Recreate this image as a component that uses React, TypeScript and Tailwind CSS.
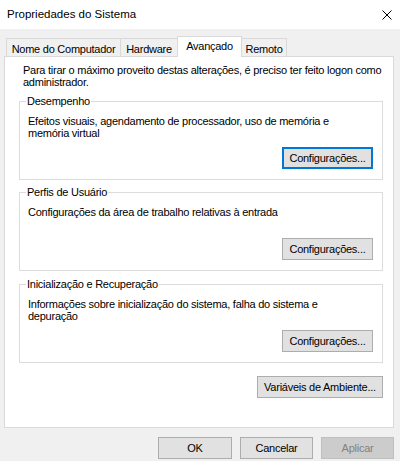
// "Propriedades do Sistema" dialog, Avançado tab (Windows 10 look).

type TabDef = { label: string; width: string; selected?: boolean };

const tabs: TabDef[] = [
  { label: "Nome do Computador", width: "w-[115px]" },
  { label: "Hardware", width: "w-[58px]" },
  { label: "Avançado", width: "w-[65px]", selected: true },
  { label: "Remoto", width: "w-[46px]" },
];

function WinButton({
  children,
  width,
  isDefault,
  disabled,
}: {
  children: string;
  width: string;
  isDefault?: boolean;
  disabled?: boolean;
}) {
  const tone = disabled
    ? "border border-[#bfbfbf] bg-[#cccccc] text-[#838383]"
    : isDefault
      ? "border-2 border-[#0078d7] bg-[#e1e1e1] text-black"
      : "border border-[#adadad] bg-[#e1e1e1] text-black";
  return (
    <button
      type="button"
      disabled={disabled}
      className={
        "flex h-[22px] items-center justify-center leading-[12px] " + width + " " + tone
      }
    >
      {children}
    </button>
  );
}

function Group({
  title,
  lines,
  isDefault,
}: {
  title: string;
  lines: string[];
  isDefault?: boolean;
}) {
  return (
    <fieldset className="border border-[#dcdcdc] pl-[8px] pr-[9px] pb-[10px]">
      <legend className="-ml-[2px] px-[1px] leading-[12px]">{title}</legend>
      <div className="flex flex-col pt-[8px]">
        <div className="h-[24px] leading-[12px] whitespace-nowrap">
          {lines.map((l, i) => (
            <div key={i}>{l}</div>
          ))}
        </div>
        <div className="mt-[8px] flex justify-end">
          <WinButton width="w-[91px]" isDefault={isDefault}>
            Configurações...
          </WinButton>
        </div>
      </div>
    </fieldset>
  );
}

export default function App() {
  return (
    <div className="flex h-[461px] w-[400px] flex-col overflow-hidden bg-[#f0f0f0] font-['Liberation_Sans',Arial,sans-serif] text-[11px] tracking-[-0.25px] text-black">
      {/* title bar */}
      <div className="flex h-[29px] items-center justify-between bg-white pl-[7px] pr-[8px]">
        <span className="text-[11.5px] tracking-normal">Propriedades do Sistema</span>
        <svg width="10" height="10" viewBox="0 0 10 10" aria-hidden="true">
          <path d="M0.5 0.5 L9.5 9.5 M9.5 0.5 L0.5 9.5" stroke="#000" strokeWidth="1" />
        </svg>
      </div>

      {/* tabs */}
      <div className="mt-[7px] ml-[4px] w-[390px]">
        <div className="flex h-[20px] items-end pl-[2px]">
          {tabs.map((t, i) => (
            <div
              key={t.label}
              className={
                "flex items-start justify-center border border-b-0 border-[#d9d9d9] leading-[12px] " +
                t.width +
                (i > 0 ? " -ml-px" : "") +
                (t.selected
                  ? " relative z-10 -mb-px h-[21px] bg-white pt-[3px]"
                  : " h-[18px] bg-[#f0f0f0] pt-[4px]")
              }
            >
              {t.label}
            </div>
          ))}
        </div>

        {/* panel */}
        <div className="flex h-[372px] flex-col border border-[#d9d9d9] bg-white pl-[14px] pr-[10px] pt-[7px]">
          <div className="pl-[4px] leading-[12px] whitespace-nowrap">
            <div>Para tirar o máximo proveito destas alterações, é preciso ter feito logon como</div>
            <div>administrador.</div>
          </div>

          <div className="mt-[7px] flex flex-col">
            <Group
              title="Desempenho"
              lines={[
                "Efeitos visuais, agendamento de processador, uso de memória e",
                "memória virtual",
              ]}
              isDefault
            />
            <div className="mt-[6px]">
              <Group
                title="Perfis de Usuário"
                lines={["Configurações da área de trabalho relativas à entrada"]}
              />
            </div>
            <div className="mt-[7px]">
              <Group
                title="Inicialização e Recuperação"
                lines={[
                  "Informações sobre inicialização do sistema, falha do sistema e",
                  "depuração",
                ]}
              />
            </div>
          </div>

          <div className="mt-[13px] flex justify-end">
            <WinButton width="w-[126px]">Variáveis de Ambiente...</WinButton>
          </div>
        </div>
      </div>

      {/* dialog buttons */}
      <div className="mt-[9px] flex justify-end gap-[8px] pr-[6px]">
        <WinButton width="w-[74px]">OK</WinButton>
        <WinButton width="w-[73px]">Cancelar</WinButton>
        <WinButton width="w-[73px]" disabled>
          Aplicar
        </WinButton>
      </div>
    </div>
  );
}
